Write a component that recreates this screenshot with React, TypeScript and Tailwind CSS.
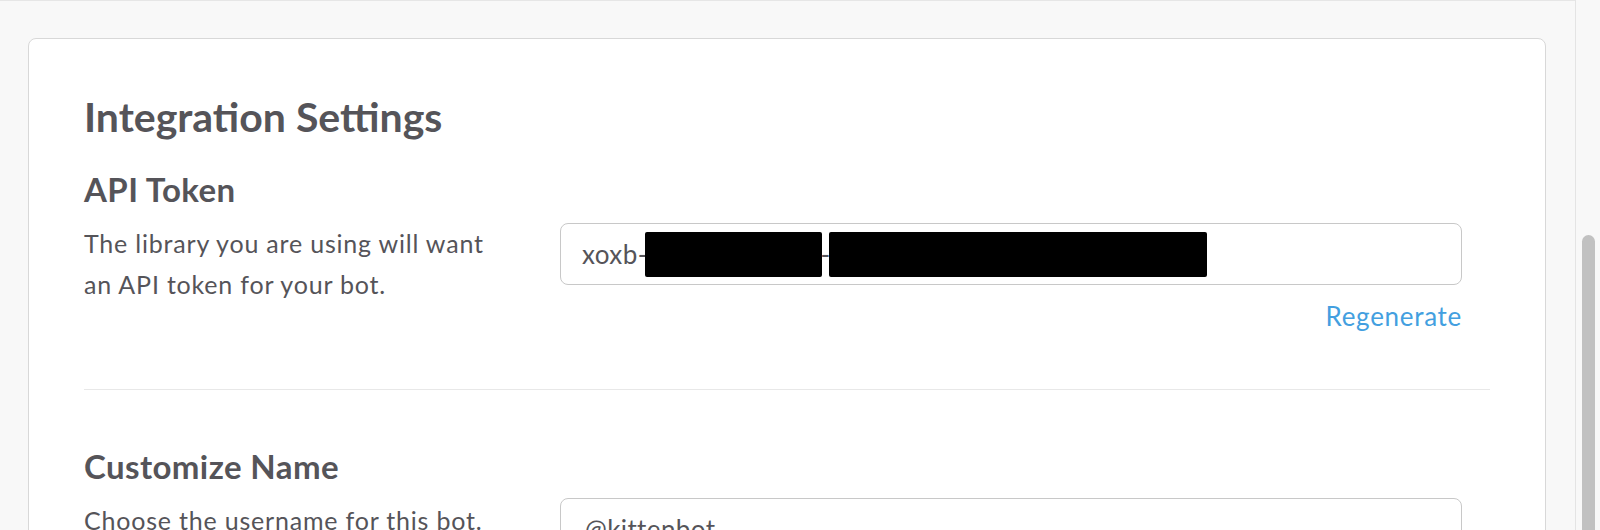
import React from "react";

function Section({
  title,
  description,
  children,
}: {
  title: string;
  description: React.ReactNode;
  children: React.ReactNode;
}) {
  return (
    <div>
      <h2 className="text-[33px] font-bold leading-[40px] tracking-[0.4px] text-[#555459]">{title}</h2>
      <div className="mt-[14px] flex items-start">
        <p className="w-[476px] shrink-0 pr-[50px] text-[25px] leading-[41px] tracking-[0.8px] text-[#555459]">
          {description}
        </p>
        <div className="w-[902px]">{children}</div>
      </div>
    </div>
  );
}

export default function App() {
  return (
    <div className="flex h-[530px] w-full overflow-hidden bg-[#f8f8f8] font-['Lato','Noto_Sans',sans-serif]">
      {/* page */}
      <div className="flex-1 border-t border-[#e6e6e6] pl-[28px] pr-[29px] pt-[37px]">
        <div className="h-[600px] rounded-[8px] border border-[#d8d8d8] bg-white pl-[55px] pr-[54px] pt-[53px]">
          <h1 className="text-[41px] font-bold leading-[50px] text-[#555459]">Integration Settings</h1>

          <div className="mt-[27px]">
            <Section
              title="API Token"
              description="The library you are using will want an API token for your bot."
            >
              <div className="flex h-[62px] items-center rounded-[8px] border border-[#c8c8c8] bg-white pl-[21px] text-[26px] tracking-[0.4px] text-[#555459]">
                <span className="w-[63px] shrink-0 whitespace-nowrap">xoxb-</span>
                <span className="h-[45px] w-[177px] shrink-0 rounded-[2px] bg-black" />
                <span className="flex w-[7px] shrink-0 justify-center">-</span>
                <span className="h-[45px] w-[378px] shrink-0 rounded-[2px] bg-black" />
              </div>
              <div className="mt-[11px] text-right text-[26px] leading-[41px] tracking-[0.7px] text-[#439fe0]">
                Regenerate
              </div>
            </Section>
          </div>

          <div className="mt-[52px] mr-[1px] border-t border-[#e8e8e8]" />

          <div className="mt-[56px]">
            <Section title="Customize Name" description="Choose the username for this bot.">
              <div className="-mt-[2px] flex h-[62px] items-center rounded-[8px] border border-[#c8c8c8] bg-white pl-[24px] text-[26px] tracking-[0.4px] text-[#555459]">
                @kittenbot
              </div>
            </Section>
          </div>
        </div>
      </div>

      {/* scrollbar */}
      <div className="w-[25px] shrink-0 border-l border-[#e4e4e4] bg-[#f8f8f8] pl-[6px] pt-[235px]">
        <div className="h-[400px] w-[13px] rounded-full bg-[#c1c1c1]" />
      </div>
    </div>
  );
}
